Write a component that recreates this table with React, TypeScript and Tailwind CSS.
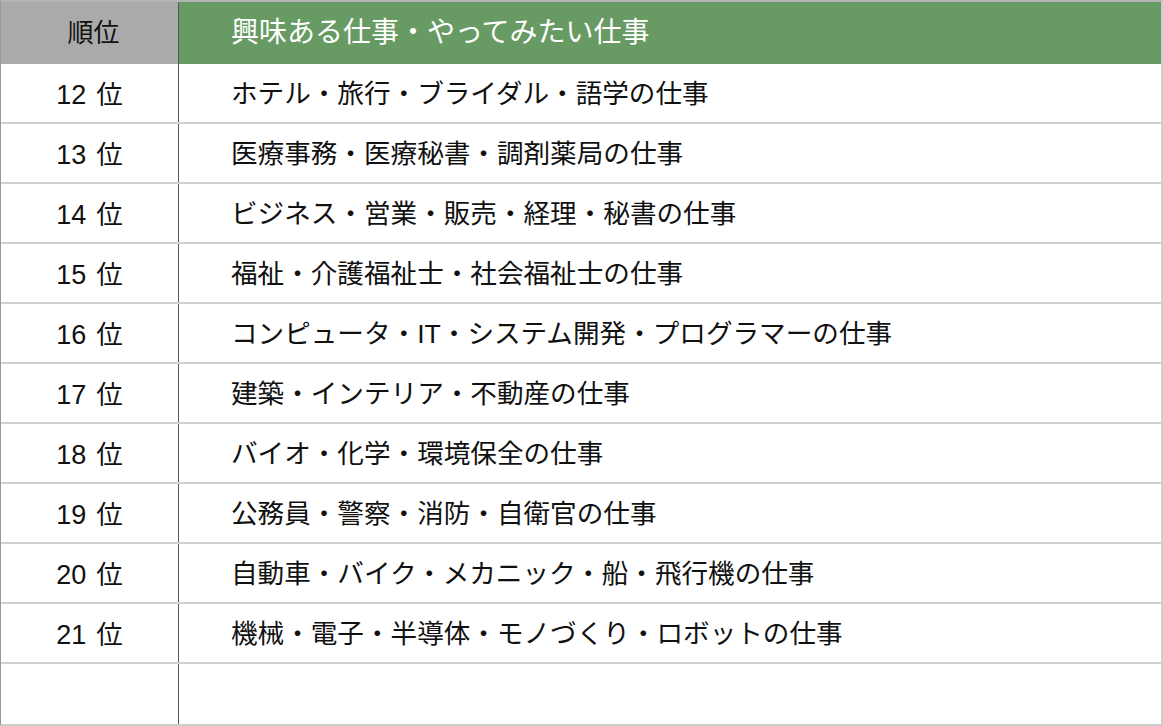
const rows = [
  { rank: "12", job: "ホテル・旅行・ブライダル・語学の仕事" },
  { rank: "13", job: "医療事務・医療秘書・調剤薬局の仕事" },
  { rank: "14", job: "ビジネス・営業・販売・経理・秘書の仕事" },
  { rank: "15", job: "福祉・介護福祉士・社会福祉士の仕事" },
  { rank: "16", job: "コンピュータ・IT・システム開発・プログラマーの仕事" },
  { rank: "17", job: "建築・インテリア・不動産の仕事" },
  { rank: "18", job: "バイオ・化学・環境保全の仕事" },
  { rank: "19", job: "公務員・警察・消防・自衛官の仕事" },
  { rank: "20", job: "自動車・バイク・メカニック・船・飛行機の仕事" },
  { rank: "21", job: "機械・電子・半導体・モノづくり・ロボットの仕事" },
  { rank: "", job: "" },
]

export default function App() {
  return (
    <div className="w-[1163px] h-[726px] bg-white font-['Liberation_Sans','Noto_Sans_CJK_JP',sans-serif] text-[#111]">
      <div className="flex flex-col border-t-2 border-t-[#b4b4b4] border-l border-l-[#9a9a9a] border-r-2 border-r-[#cdcdcd] border-b-2 border-b-[#cdcdcd]">
        <div className="flex h-[62px]">
          <div className="w-[178px] shrink-0 border-r border-[#555] bg-[#aaaaaa] flex items-center justify-center text-[26px] pl-2">
            順位
          </div>
          <div className="flex-1 bg-[#689a64] flex items-center pl-[52px] text-[28px] text-white">
            興味ある仕事・やってみたい仕事
          </div>
        </div>
        {rows.map((r, i) => (
          <div
            key={i}
            className={
              "flex h-[60px] " +
              (i < rows.length - 1 ? "border-b-2 border-[#d2d2d2]" : "")
            }
          >
            <div className="w-[178px] shrink-0 border-r border-[#555] flex items-center justify-center pt-1">
              {r.rank && (
                <span className="flex items-baseline">
                  <span className="text-[27px]">{r.rank}</span>
                  <span className="ml-[10px] text-[26.5px]">位</span>
                </span>
              )}
            </div>
            <div className="flex-1 flex items-center pl-[52px] pt-1 text-[26.6px]">{r.job}</div>
          </div>
        ))}
      </div>
    </div>
  )
}
